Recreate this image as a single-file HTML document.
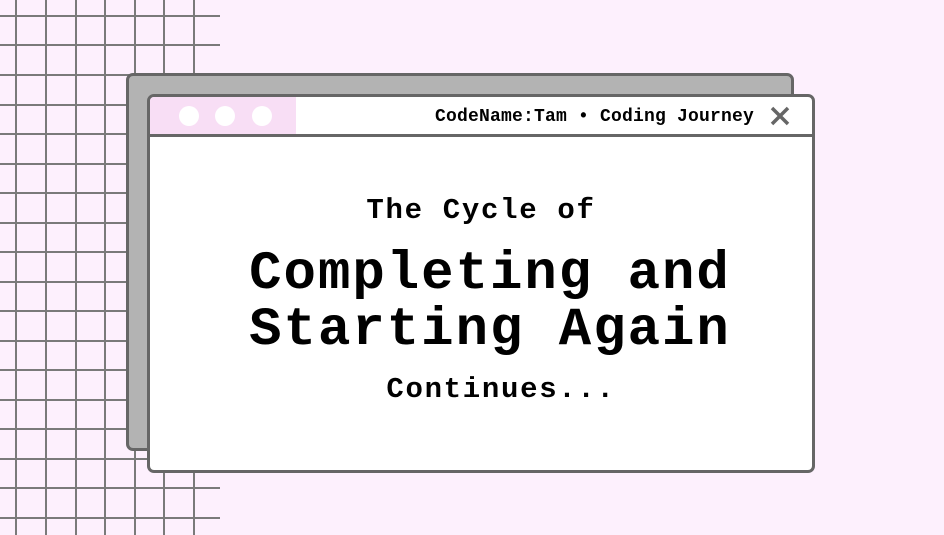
<!DOCTYPE html>
<html><head><style>
*{margin:0;padding:0;box-sizing:border-box}
body{width:944px;height:535px;background:#fdf0fd;position:relative;overflow:hidden;font-family:"Liberation Mono","Courier New",monospace;font-weight:bold;color:#000}
.v{position:absolute;top:0;width:2px;height:535px;background:#7a7a7a}
.h{position:absolute;left:0;width:220px;height:2px;background:#7a7a7a}
.back{position:absolute;left:126px;top:73px;width:668px;height:378px;background:#b3b3b3;border:3px solid #666;border-radius:7px}
.front{position:absolute;left:147px;top:94px;width:668px;height:379px;background:#fff;border:3px solid #666;border-radius:7px;overflow:hidden}
.bar{position:absolute;left:0;top:0;width:100%;height:40px;border-bottom:3px solid #666}
.pink{position:absolute;left:0;top:0;width:146px;height:37px;background:#f8def5}
.dot{position:absolute;top:9px;width:20px;height:20px;border-radius:50%;background:#fff}
.title{position:absolute;right:58px;top:10px;font-size:18px;line-height:20px;white-space:nowrap;letter-spacing:0.2px}
.x{position:absolute;left:619px;top:8px;width:22px;height:22px}
.t{position:absolute;left:0;width:100%;text-align:center;white-space:nowrap}
</style></head><body>
<div class="v" style="left:15px"></div><div class="v" style="left:45px"></div><div class="v" style="left:75px"></div><div class="v" style="left:104px"></div><div class="v" style="left:134px"></div><div class="v" style="left:163px"></div><div class="v" style="left:193px"></div>
<div class="h" style="top:15px"></div><div class="h" style="top:44px"></div><div class="h" style="top:74px"></div><div class="h" style="top:104px"></div><div class="h" style="top:133px"></div><div class="h" style="top:163px"></div><div class="h" style="top:192px"></div><div class="h" style="top:222px"></div><div class="h" style="top:251px"></div><div class="h" style="top:281px"></div><div class="h" style="top:310px"></div><div class="h" style="top:340px"></div><div class="h" style="top:369px"></div><div class="h" style="top:399px"></div><div class="h" style="top:428px"></div><div class="h" style="top:458px"></div><div class="h" style="top:487px"></div><div class="h" style="top:517px"></div>
<div class="back"></div>
<div class="front">
 <div class="bar">
  <div class="pink"></div>
  <div class="dot" style="left:29px"></div><div class="dot" style="left:65px"></div><div class="dot" style="left:102px"></div>
  <div class="title">CodeName:Tam • Coding Journey</div>
  <svg class="x" viewBox="0 0 22 22"><path d="M3 3L19 19M19 3L3 19" stroke="#666" stroke-width="3.5"/></svg>
 </div>
 <div class="t" style="top:96px;font-size:29px;line-height:36px;letter-spacing:1.7px">The Cycle of</div>
 <div class="t" style="top:150px;font-size:54px;line-height:56px;letter-spacing:2px;padding-left:18px">Completing and<br>Starting Again</div>
 <div class="t" style="top:275px;font-size:29px;line-height:36px;letter-spacing:1.7px;padding-left:40px">Continues...</div>
</div>
</body></html>
